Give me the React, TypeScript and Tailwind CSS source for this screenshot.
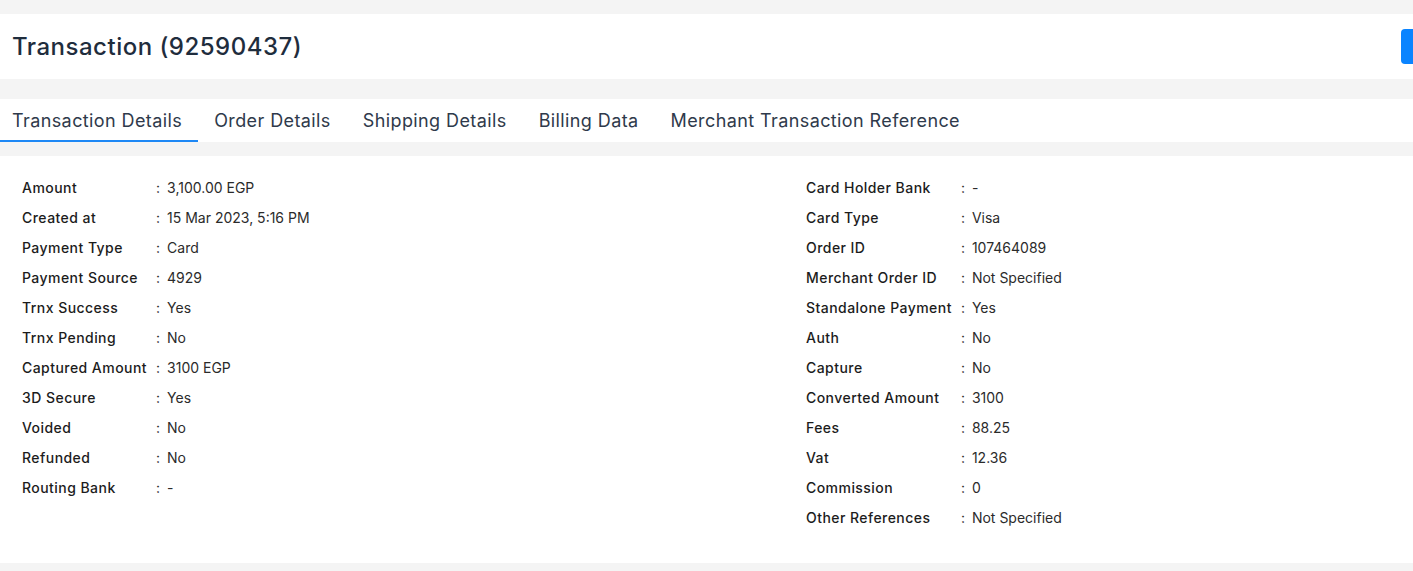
const leftRows: [string, string][] = [
  ['Amount', '3,100.00 EGP'],
  ['Created at', '15 Mar 2023, 5:16 PM'],
  ['Payment Type', 'Card'],
  ['Payment Source', '4929'],
  ['Trnx Success', 'Yes'],
  ['Trnx Pending', 'No'],
  ['Captured Amount', '3100 EGP'],
  ['3D Secure', 'Yes'],
  ['Voided', 'No'],
  ['Refunded', 'No'],
  ['Routing Bank', '-'],
];

const rightRows: [string, string][] = [
  ['Card Holder Bank', '-'],
  ['Card Type', 'Visa'],
  ['Order ID', '107464089'],
  ['Merchant Order ID', 'Not Specified'],
  ['Standalone Payment', 'Yes'],
  ['Auth', 'No'],
  ['Capture', 'No'],
  ['Converted Amount', '3100'],
  ['Fees', '88.25'],
  ['Vat', '12.36'],
  ['Commission', '0'],
  ['Other References', 'Not Specified'],
];

const tabs = [
  'Transaction Details',
  'Order Details',
  'Shipping Details',
  'Billing Data',
  'Merchant Transaction Reference',
];

function InfoTable({ rows }: { rows: [string, string][] }) {
  return (
    <div className="grid grid-cols-[auto_1fr] auto-rows-[30px] items-center">
      {rows.map(([label, value]) => (
        <div key={label} className="contents">
          <div className="pr-[9px] text-[14px] font-medium tracking-[0.45px] text-[#1c1c1c] whitespace-nowrap">{label}</div>
          <div className="text-[14px] text-[#2b2b2b] whitespace-nowrap">
            <span className="mr-[7px]">:</span>
            {value}
          </div>
        </div>
      ))}
    </div>
  );
}

export default function App() {
  return (
    <div className="min-h-[571px] bg-[#f4f4f4] pt-[14px] pb-[8px]" style={{ fontFamily: 'Inter, "Noto Sans", sans-serif' }}>
      <div className="relative flex h-[65px] items-center bg-white px-[12px]">
        <h1 className="text-[24px] font-medium tracking-[0.5px] text-[#1f2d3d]">Transaction (92590437)</h1>
        <div className="absolute right-0 top-[15px] h-[35px] w-[12px] rounded-l-[4px] bg-[#0a84ff]" />
      </div>

      <div className="mt-[20px] h-[43px] overflow-hidden bg-white">
        <div className="-ml-[4px] flex h-full">
          {tabs.map((t, i) => (
            <div
              key={t}
              className={
                'flex items-center px-[16px] pt-[2px] text-[18px] tracking-[0.4px] text-[#2f3a4b] ' +
                (i === 0 ? 'border-b-2 border-[#1e88f5]' : 'border-b-2 border-transparent')
              }
            >
              {t}
            </div>
          ))}
        </div>
      </div>

      <div className="mt-[14px] flex bg-white px-[22px] pt-[16px] pb-[31px]">
        <div className="w-[784px]">
          <InfoTable rows={leftRows} />
        </div>
        <div className="flex-1">
          <InfoTable rows={rightRows} />
        </div>
      </div>
    </div>
  );
}
